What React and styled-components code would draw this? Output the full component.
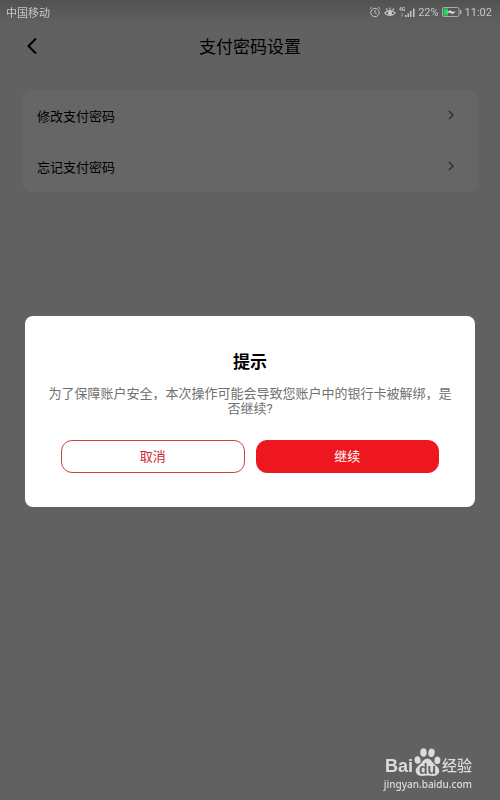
import React from "react"
import styled, { createGlobalStyle } from "styled-components"

const GlobalStyle = createGlobalStyle`
  * {
    box-sizing: border-box;
  }

  body {
    margin: 0;
    background: #f3f3f3;
    color: #000;
    font-family: Roboto, "Noto Sans CJK SC", sans-serif;
  }

  button {
    font-family: inherit;
    cursor: pointer;
  }
`

const Page = styled.div`
  min-height: 100vh;
`

const StatusBar = styled.div`
  position: relative;
  z-index: 2;
  display: flex;
  align-items: center;
  justify-content: space-between;
  height: 24px;
  padding: 0 8px 0 6px;
  color: #c6c6c6;
  font-size: 11px;
  background: linear-gradient(rgba(0, 0, 0, 0.15), rgba(0, 0, 0, 0));
`

const StatusIcons = styled.div`
  display: flex;
  align-items: center;
  gap: 3px;

  svg {
    display: block;
  }
`

const StatusText = styled.span`
  font-size: 11px;
`

const Clock = styled.time`
  font-size: 11px;
`

const Header = styled.header`
  display: grid;
  grid-template-columns: 44px 1fr 44px;
  align-items: center;
  height: 44px;
  padding: 0 10px;
`

const BackButton = styled.button`
  display: flex;
  justify-content: center;
  align-items: center;
  height: 44px;
  padding: 0;
  border: 0;
  background: none;
`

const HeaderTitle = styled.h1`
  margin: 0;
  padding-top: 2px;
  font-size: 17px;
  font-weight: 400;
  line-height: 24px;
  text-align: center;
`

const Menu = styled.nav`
  margin: 22px 22px 0;
  border-radius: 10px;
  background: #fff;
`

const MenuItem = styled.a`
  display: flex;
  align-items: center;
  justify-content: space-between;
  height: 51px;
  padding: 0 24px 1px 15px;
  color: #000;
  font-size: 13px;
  text-decoration: none;
`

const Overlay = styled.div`
  position: fixed;
  inset: 0;
  z-index: 1;
  display: flex;
  align-items: center;
  justify-content: center;
  padding: 22px 25px 0;
  background: rgba(0, 0, 0, 0.6);
`

const Dialog = styled.section`
  width: 100%;
  padding: 34px 20px;
  border-radius: 8px;
  background: #fff;
  text-align: center;
`

const DialogTitle = styled.h2`
  margin: 0;
  font-size: 17px;
  font-weight: 700;
  line-height: 24px;
`

const DialogText = styled.p`
  margin: 12px 0 24px;
  color: #707070;
  font-size: 13px;
  line-height: 15px;
`

const Actions = styled.div`
  display: grid;
  grid-template-columns: 1fr 1fr;
  gap: 11px;
  padding: 0 16px;
`

const ActionButton = styled.button`
  height: 33px;
  padding: 0 0 1px;
  border: 1px solid ${props => (props.$primary ? "#ee1720" : "#c8434c")};
  border-radius: 11px;
  background: ${props => (props.$primary ? "#ee1720" : "#fff")};
  color: ${props => (props.$primary ? "#fff" : "#cf2733")};
  font-size: 13px;
`

const Watermark = styled.div`
  position: fixed;
  right: 28px;
  bottom: 8px;
  z-index: 3;
  display: flex;
  flex-direction: column;
  align-items: flex-end;
  color: #dcdcdc;
`

const Brand = styled.div`
  display: flex;
  align-items: flex-end;
  gap: 1px;
  height: 30px;
`

const BrandName = styled.span`
  font-family: "Liberation Sans", sans-serif;
  font-size: 18px;
  font-weight: 700;
  line-height: 20px;
`

const BrandChannel = styled.span`
  font-size: 15px;
  font-weight: 500;
  line-height: 20px;
`

const Site = styled.span`
  font-family: "Noto Sans", sans-serif;
  font-size: 10px;
  font-weight: 500;
  line-height: 16px;
`

const AlarmIcon = () => (
  <svg width="12" height="12" viewBox="0 0 12 12" fill="none" stroke="currentColor" aria-hidden="true">
    <circle cx="6" cy="6.5" r="4.2" />
    <path d="M6 4v2.7l1.8 1M.8 2.8l2-1.8M11.2 2.8l-2-1.8" />
  </svg>
)

const EyeIcon = () => (
  <svg width="12" height="12" viewBox="0 0 12 12" fill="none" stroke="currentColor" strokeWidth="1.2" aria-hidden="true">
    <path d="M.7 7C3 3.8 9 3.8 11.3 7 9 10.2 3 10.2.7 7zM6 3.8V1.5M3.3 4.2l-1-1.8M8.7 4.2l1-1.8" />
    <circle cx="6" cy="7" r="1.6" fill="currentColor" />
  </svg>
)

const SignalIcon = () => (
  <svg width="16" height="12" viewBox="0 0 16 12" fill="currentColor" aria-hidden="true">
    <text x="0" y="5" fontSize="5" fontWeight="700">4G</text>
    <path d="M3 6.500l1.500 2H1.500zM3 11l1.500-1.800H1.500z" opacity=".5" />
    <path d="M6 9h1.500v2H6zM8.500 7.500H10V11H8.500zM11 5h1.500v6H11zM14 2.500h1.500V11H14z" />
  </svg>
)

const BatteryIcon = () => (
  <svg width="20" height="10" viewBox="0 0 20 10" aria-hidden="true">
    <rect x=".5" y=".5" width="16.5" height="9" rx="1.5" fill="none" stroke="#aaa" />
    <path d="M18 3h1.500v4H18z" fill="#aaa" />
    <path d="M1.500 1.500H6v7H1.500z" fill="#21d35c" />
    <path d="M4 5.500l5-2.500v1.500l5 .2-4.500 2.800V6z" fill="#dedede" />
  </svg>
)

const BackIcon = () => (
  <svg width="10" height="18" viewBox="0 0 10 18" fill="none" stroke="#000" strokeWidth="2" aria-hidden="true">
    <path d="M9 1.500L1.500 9 9 16.500" />
  </svg>
)

const ChevronIcon = () => (
  <svg width="6" height="10" viewBox="0 0 6 10" fill="none" stroke="#777" strokeWidth="1.5" aria-hidden="true">
    <path d="M1 1l4 4-4 4" />
  </svg>
)

const PawIcon = () => (
  <svg width="27" height="28" viewBox="0 0 27 28" fill="currentColor" aria-hidden="true">
    <ellipse cx="3.600" cy="12" rx="3" ry="3.800" transform="rotate(-12 3.600 12)" />
    <ellipse cx="9.500" cy="4.500" rx="3.200" ry="4.200" />
    <ellipse cx="17.500" cy="4.800" rx="3.200" ry="4.200" transform="rotate(10 17.500 4.800)" />
    <ellipse cx="23.400" cy="12.300" rx="3" ry="3.700" transform="rotate(8 23.400 12.300)" />
    <path d="M13.500 10.500c2.800 0 4 2.300 5.700 4.600 2 2.600 6 4.100 6 7.700 0 3.300-2.700 5.200-5.700 5.200-2.100 0-4.100-.5-6-.5s-3.900.5-6 .5c-3 0-5.800-1.900-5.800-5.200 0-3.500 3.600-5.200 5.600-7.700 1.500-1.900 3.400-4.600 6.200-4.600z" />
    <text x="13.500" y="25.500" textAnchor="middle" fontFamily="Liberation Sans, sans-serif" fontSize="14" fontWeight="700" fill="#616161">du</text>
  </svg>
)

const menuItems = ["修改支付密码", "忘记支付密码"]

const App = () => (
  <Page>
    <GlobalStyle />
    <StatusBar>
      <StatusText>中国移动</StatusText>
      <StatusIcons>
        <AlarmIcon />
        <EyeIcon />
        <SignalIcon />
        <StatusText>22%</StatusText>
        <BatteryIcon />
        <Clock>11:02</Clock>
      </StatusIcons>
    </StatusBar>
    <Header>
      <BackButton type="button" aria-label="返回">
        <BackIcon />
      </BackButton>
      <HeaderTitle>支付密码设置</HeaderTitle>
    </Header>
    <Menu>
      {menuItems.map(item => (
        <MenuItem href="#" key={item}>
          {item}
          <ChevronIcon />
        </MenuItem>
      ))}
    </Menu>
    <Overlay>
      <Dialog role="dialog" aria-modal="true" aria-labelledby="dialog-title">
        <DialogTitle id="dialog-title">提示</DialogTitle>
        <DialogText>
          为了保障账户安全，本次操作可能会导致您账户中的银行卡被解绑，是否继续?
        </DialogText>
        <Actions>
          <ActionButton type="button">取消</ActionButton>
          <ActionButton type="button" $primary>继续</ActionButton>
        </Actions>
      </Dialog>
    </Overlay>
    <Watermark>
      <Brand>
        <BrandName>Bai</BrandName>
        <PawIcon />
        <BrandChannel>经验</BrandChannel>
      </Brand>
      <Site>jingyan.baidu.com</Site>
    </Watermark>
  </Page>
)

export default App
